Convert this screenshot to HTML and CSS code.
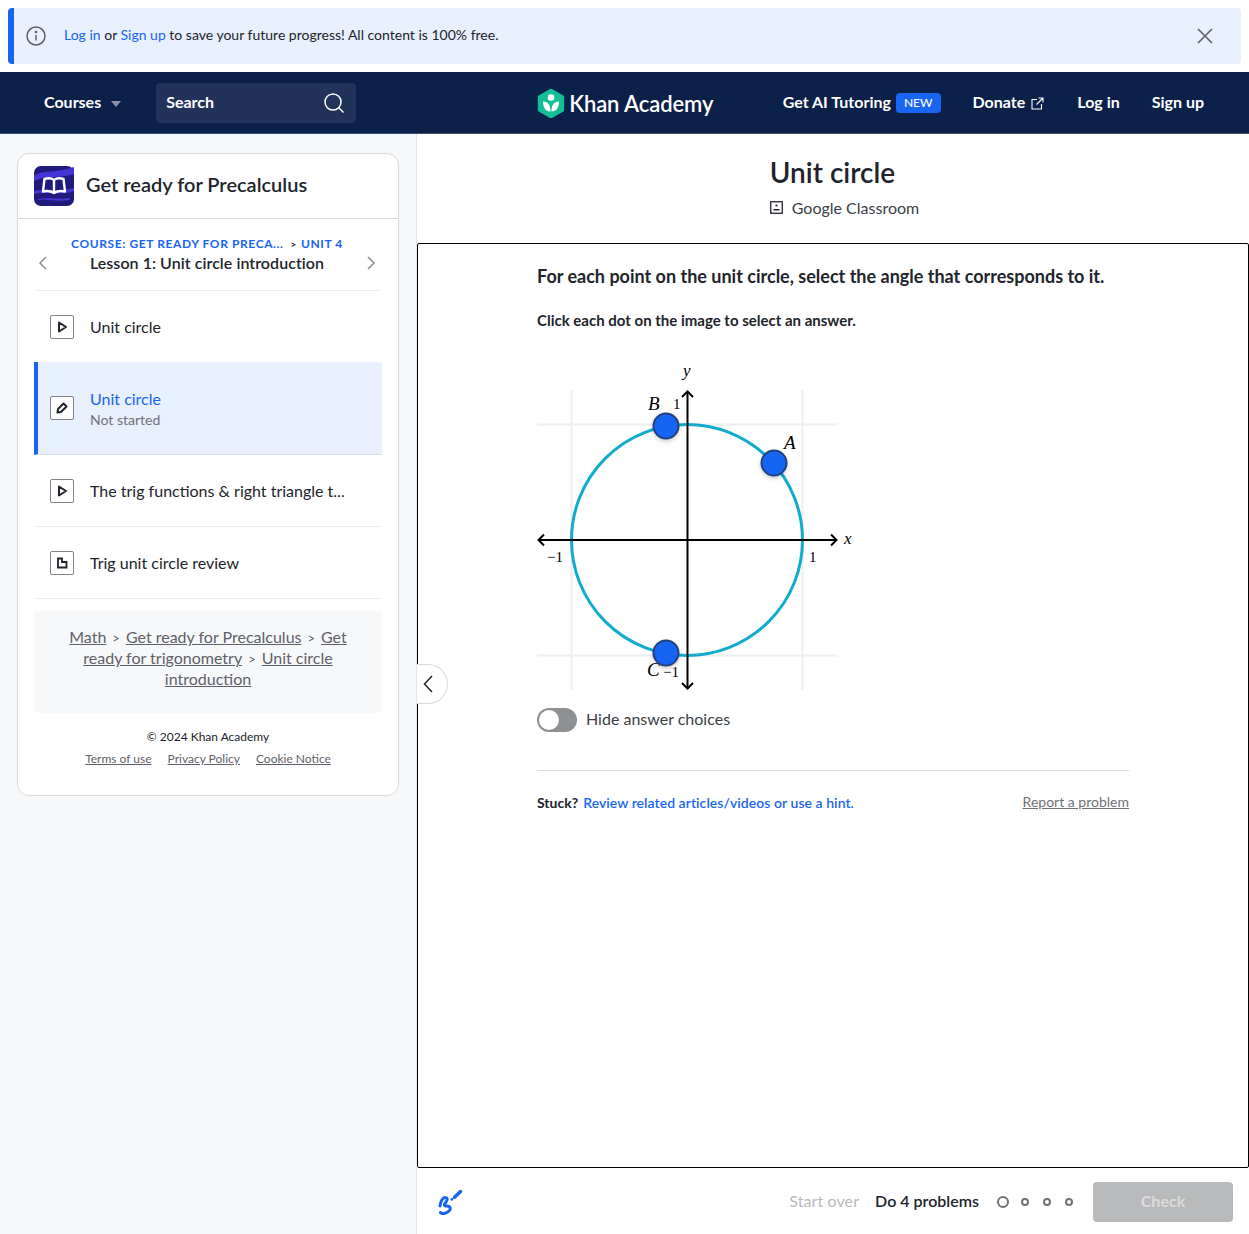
FILE: index.html
```html
<!DOCTYPE html>
<html lang="en">
<head>
    <meta charset="UTF-8" />
    <title>Unit circle</title>
    <link rel="stylesheet" href="styles.css">
</head>
<body>
    <div class="banner">
        <svg class="bannerInfo" width="20" height="20" viewBox="0 0 20 20" fill="none" stroke="#5f6066" stroke-width="1.5">
            <circle cx="10" cy="10" r="9"/>
            <path d="M10 9v5.5"/>
            <circle cx="10" cy="6" r=".6"/>
        </svg>
        <p class="bannerText"><a href="#">Log in</a> or <a href="#">Sign up</a> to save your future progress! All content is 100% free.</p>
        <svg class="bannerClose" width="16" height="16" viewBox="0 0 16 16" stroke="#5f6066" stroke-width="1.6">
            <path d="M1 1l14 14M15 1L1 15"/>
        </svg>
    </div>

    <nav class="topnav">
        <div class="navLeft">
            <span class="navLink">Courses</span>
            <span class="caret"></span>
            <div class="searchBox">
                <span class="searchLabel">Search</span>
                <svg width="22" height="22" viewBox="0 0 22 22" fill="none" stroke="#fff" stroke-width="1.5">
                    <circle cx="10" cy="10" r="8"/>
                    <path d="M15.8 15.8l4.7 4.7"/>
                </svg>
            </div>
        </div>
        <div class="brand">
            <svg width="28" height="29" viewBox="0 0 28 29">
                <path d="M14 0.5l12.2 7v14L14 28.5 1.8 21.500v-14z" fill="#14bf96" stroke="#14bf96" stroke-linejoin="round" stroke-width="2"/>
                <circle cx="14" cy="8.500" r="3.300" fill="#fff"/>
                <path d="M6 12.500c5 0 7.500 3.500 7.500 10-5 0-7.500-4-7.500-10zM22 12.500c-5 0-7.500 3.500-7.500 10 5 0 7.500-4 7.500-10z" fill="#fff"/>
            </svg>
            <span class="brandName">Khan Academy</span>
        </div>
        <div class="navRight">
            <span class="navLink">Get AI Tutoring</span>
            <span class="newBadge">NEW</span>
            <span class="navLink donate">Donate</span>
            <svg class="extIcon" width="13" height="13" viewBox="0 0 13 13" fill="none" stroke="#fff" stroke-width="1.100">
                <path d="M6 2.500H1v9.500h9.500V7M7.500 1H12v4.500M12 1L5.500 7.500"/>
            </svg>
            <span class="navLink login">Log in</span>
            <span class="navLink signup">Sign up</span>
        </div>
    </nav>

    <div class="pageBody">
        <aside class="sidebar">
            <div class="card">
                <div class="cardHead">
                    <svg class="courseIcon" width="40" height="40" viewBox="0 0 40 40">
                        <rect width="40" height="40" rx="7" fill="#201a7c"/>
                        <path d="M0 9c10-5 24-2 40-8v7C26 13 12 9 0 15zM0 25c12-3 26 1 40-3v3c-14 5-28 0-40 3zM4 33c12-2 20 1 32-1v2c-12 2-20-1-32 0z" fill="#4534d6"/>
                        <path d="M10.500 13c3.500-1 7-1 9.500 1 2.500-2 6-2 9.500-1l1.500 12.500c-4-1-8-.5-11 1.500-3-2-7-2.500-11-1.500zM20 14v13" fill="none" stroke="#fff" stroke-width="2.400" stroke-linejoin="round"/>
                    </svg>
                    <h2 class="courseTitle">Get ready for Precalculus</h2>
                </div>
                <div class="cardBody">
                    <div class="lessonNav">
                        <svg class="lessonArrow" width="9" height="14" viewBox="0 0 9 14" fill="none" stroke="#8a8b90" stroke-width="1.500"><path d="M8 1L2 7l6 6"/></svg>
                        <div class="lessonInfo">
                            <div class="crumbs"><a href="#">COURSE: GET READY FOR PRECA...</a><span class="crumbSep">&gt;</span><a href="#">UNIT 4</a></div>
                            <div class="lessonName">Lesson 1: Unit circle introduction</div>
                        </div>
                        <svg class="lessonArrow" width="9" height="14" viewBox="0 0 9 14" fill="none" stroke="#8a8b90" stroke-width="1.500"><path d="M1 1l6 6-6 6"/></svg>
                    </div>

                    <ul class="itemList">
                        <li class="item plain">
                            <span class="itemIcon"><svg width="12" height="12" viewBox="0 0 12 12"><path d="M3 1.500l7 4.500-7 4.500z" fill="none" stroke="#21242c" stroke-width="2" stroke-linejoin="round"/></svg></span>
                            <span class="itemTitle">Unit circle</span>
                        </li>
                        <li class="item active">
                            <span class="itemIcon"><svg width="12" height="12" viewBox="0 0 12 12"><path d="M7.500 1.500l3 3-5.500 5.500-3.500.5.5-3.500z" fill="none" stroke="#21242c" stroke-width="2" stroke-linejoin="round"/></svg></span>
                            <span class="itemText">
                                <span class="itemTitle">Unit circle</span>
                                <span class="itemSub">Not started</span>
                            </span>
                        </li>
                        <li class="item">
                            <span class="itemIcon"><svg width="12" height="12" viewBox="0 0 12 12"><path d="M3 1.500l7 4.500-7 4.500z" fill="none" stroke="#21242c" stroke-width="2" stroke-linejoin="round"/></svg></span>
                            <span class="itemTitle">The trig functions &amp; right triangle t...</span>
                        </li>
                        <li class="item">
                            <span class="itemIcon"><svg width="12" height="12" viewBox="0 0 12 12"><path d="M2 1.500h4v3.500h4.500v5.500H2z" fill="none" stroke="#21242c" stroke-width="1.800"/></svg></span>
                            <span class="itemTitle">Trig unit circle review</span>
                        </li>
                    </ul>

                    <div class="pathBox">
                        <a href="#">Math</a><span class="pathSep">&gt;</span><a href="#">Get ready for Precalculus</a><span class="pathSep">&gt;</span><a href="#">Get ready for trigonometry</a><span class="pathSep">&gt;</span><a href="#">Unit circle introduction</a>
                    </div>

                    <div class="copyright">© 2024 Khan Academy</div>
                    <div class="legalLinks">
                        <a href="#">Terms of use</a>
                        <a href="#">Privacy Policy</a>
                        <a href="#">Cookie Notice</a>
                    </div>
                </div>
            </div>
        </aside>

        <main class="content">
            <header class="contentHead">
                <div class="headInner">
                    <h1 class="pageTitle">Unit circle</h1>
                    <div class="classroom">
                        <svg width="13" height="13" viewBox="0 0 13 13" fill="none">
                            <rect x=".75" y=".75" width="11.500" height="11.500" stroke="#21242c" stroke-width="1.300"/>
                            <circle cx="6.500" cy="4.500" r="1.100" fill="#21242c"/>
                            <path d="M3.500 8h6v1.500h-6z" fill="#21242c"/>
                        </svg>
                        <span>Google Classroom</span>
                    </div>
                </div>
            </header>

            <section class="exercise">
                <div class="exerciseInner">
                    <p class="prompt">For each point on the unit circle, select the angle that corresponds to it.</p>
                    <p class="instruction">Click each dot on the image to select an answer.</p>

                    <svg class="graph" width="330" height="340" viewBox="537 360 330 340">
                        <defs>
                            <filter id="dotShadow" x="-50%" y="-50%" width="200%" height="200%">
                                <feDropShadow dx="0" dy="2" stdDeviation="2" flood-color="#000" flood-opacity=".2"/>
                            </filter>
                        </defs>
                        <g stroke="#eeeeee" stroke-width="2">
                            <path d="M571.500 390v300M802.500 390v300M537 424.500h300M537 655.500h300"/>
                        </g>
                        <circle cx="687" cy="540" r="115.500" fill="none" stroke="#11accd" stroke-width="3"/>
                        <g fill="none" stroke="#000" stroke-width="2">
                            <path d="M539 540h297M687.500 392v297"/>
                            <path d="M544 534.500l-5.500 5.500 5.500 5.500M831 534.500l5.500 5.500-5.500 5.500M682 397l5.500-5.500 5.500 5.500M682 683l5.500 5.500 5.500-5.500"/>
                        </g>
                        <g class="mathLabels">
                            <text x="683" y="376" class="mathVar">y</text>
                            <text x="844" y="544" class="mathVar">x</text>
                            <text x="809" y="562">1</text>
                            <text x="547" y="562">−1</text>
                            <text x="673" y="409">1</text>
                            <text x="663" y="677">−1</text>
                            <text x="648" y="410" class="mathVar big">B</text>
                            <text x="784" y="449" class="mathVar big">A</text>
                            <text x="647" y="676" class="mathVar big">C</text>
                        </g>
                        <g fill="#1865f2" stroke="#23407f" stroke-width="2" filter="url(#dotShadow)">
                            <circle cx="774" cy="463" r="12.500"/>
                            <circle cx="666" cy="426" r="12.500"/>
                            <circle cx="666" cy="653" r="12.500"/>
                        </g>
                    </svg>

                    <div class="toggleRow">
                        <span class="toggle"><span class="toggleKnob"></span></span>
                        <span class="toggleLabel">Hide answer choices</span>
                    </div>

                    <div class="stuckRow">
                        <span class="stuck"><b>Stuck?</b><a href="#">Review related articles/videos or use a hint.</a></span>
                        <a href="#" class="report">Report a problem</a>
                    </div>
                </div>
            </section>

            <footer class="taskBar">
                <svg width="26" height="26" viewBox="0 0 26 26" fill="none" stroke="#1865f2" stroke-linecap="round" stroke-linejoin="round">
                    <path d="M16.500 8.300L22.500 2.500" stroke-width="3.500"/>
                    <path d="M13.700 10.500l.3-.3" stroke-width="2.500"/>
                    <path d="M2 17C2.500 12 5 8 7.500 8.500 10.500 9 9 12 7 14.500 5.500 16.500 7 17 9 17c3 0 4.500 2.500 2 5-2.500 2.500-7 3.500-8.500 1.500" stroke-width="3"/>
                </svg>
                <div class="taskRight">
                    <span class="startOver">Start over</span>
                    <span class="doCount">Do 4 problems</span>
                    <span class="dots">
                        <span class="dot first"></span>
                        <span class="dot"></span>
                        <span class="dot"></span>
                        <span class="dot"></span>
                    </span>
                    <button class="checkBtn" disabled>Check</button>
                </div>
            </footer>

            <div class="collapseTab">
                <svg width="10" height="18" viewBox="0 0 10 18" fill="none" stroke="#21242c" stroke-width="1.500"><path d="M9 1L1.500 9 9 17"/></svg>
            </div>
        </main>
    </div>
</body>
</html>
```

FILE: styles.css
```css
html, body {
    height: 100%;
}

body {
    margin: 0;
    font-family: 'Lato', sans-serif;
    color: #21242c;
    background: #fff;
    display: flex;
    flex-direction: column;
    overflow: hidden;
}

a {
    color: #1865f2;
    text-decoration: none;
}

/* top banner */
.banner {
    display: flex;
    align-items: center;
    height: 56px;
    margin: 8px 8px 8px 8px;
    padding: 0 28px 0 12px;
    box-sizing: border-box;
    flex-shrink: 0;
    background: #e8effd;
    border-left: 6px solid #1865f2;
    border-radius: 4px;
}

.bannerText {
    margin: 0 0 3px 18px;
    font-size: 14px;
    flex: 1;
}

.bannerInfo {
    flex-shrink: 0;
}

/* nav */
.topnav {
    position: relative;
    display: flex;
    align-items: center;
    justify-content: space-between;
    height: 62px;
    box-sizing: border-box;
    flex-shrink: 0;
    padding: 1px 45px 0 44px;
    background: #0c2149;
    border-bottom: 1px solid #3d4f73;
}

.navLeft, .navRight, .brand {
    display: flex;
    align-items: center;
}

.navLink, .searchLabel {
    padding-bottom: 4px;
    color: #fff;
    font-size: 16px;
    font-weight: 700;
}

.caret {
    width: 0;
    height: 0;
    margin-left: 10px;
    margin-top: 2px;
    border-left: 5.500px solid transparent;
    border-right: 5.500px solid transparent;
    border-top: 6px solid #8a93a6;
}

.searchBox {
    display: flex;
    align-items: center;
    justify-content: space-between;
    width: 200px;
    height: 40px;
    margin-left: 35px;
    padding: 0 11px 0 10px;
    box-sizing: border-box;
    background: #21335b;
    border-radius: 4px;
}

.brand {
    gap: 4px;
    margin-left: 181px;
}

.brandName {
    color: #fff;
    font-size: 22px;
    font-weight: 600;
    letter-spacing: -.1px;
}

.navRight {
    margin-left: auto;
}

.newBadge {
    margin-left: 5px;
    padding: 0 8px;
    height: 20px;
    line-height: 20px;
    font-size: 12px;
    font-weight: 500;
    color: #fff;
    background: #1865f2;
    border-radius: 4px;
}

.donate {
    margin-left: 32px;
}

.extIcon {
    margin-left: 6px;
}

.login {
    margin-left: 33px;
}

.signup {
    margin-left: 32px;
}

/* body */
.pageBody {
    position: relative;
    display: flex;
    flex: 1;
    min-height: 0;
}

.sidebar {
    width: 417px;
    padding: 19px 17px 0 17px;
    box-sizing: border-box;
    flex-shrink: 0;
    background: #f7f8fa;
    border-right: 1px solid #e4e5e6;
}

.card {
    background: #fff;
    border: 1px solid #d8d9db;
    border-radius: 12px;
    width: 382px;
    box-sizing: border-box;
}

.cardHead {
    display: flex;
    align-items: center;
    gap: 12px;
    height: 65px;
    padding: 0 16px;
    box-sizing: border-box;
    border-bottom: 1px solid #d8d9db;
}

.courseTitle {
    margin: 0 0 5px;
    font-size: 20px;
    font-weight: 600;
}

.cardBody {
    padding: 0 16px;
}

.lessonNav {
    display: flex;
    align-items: flex-end;
    justify-content: space-between;
    height: 72px;
    padding: 0 6px 20px 4px;
    box-sizing: border-box;
    border-bottom: 1px solid #eeeeef;
}

.lessonArrow {
    flex-shrink: 0;
}

.lessonInfo {
    text-align: center;
    margin-bottom: -4px;
}

.crumbs {
    font-size: 12px;
    font-weight: 700;
    letter-spacing: .6px;
    line-height: 16px;
}

.crumbSep {
    margin: 0 4px 0 7px;
    font-size: 10px;
    line-height: 1;
    color: #21242c;
}

.lessonName {
    font-size: 16px;
    font-weight: 600;
    letter-spacing: .05px;
    line-height: 22px;
}

.itemList {
    list-style: none;
    margin: 0;
    padding: 0;
}

.item {
    display: flex;
    align-items: center;
    gap: 16px;
    height: 72px;
    padding-left: 16px;
    box-sizing: border-box;
    border-bottom: 1px solid #eeeeef;
    font-size: 16px;
}

.item.plain {
    height: 71px;
    border-bottom: none;
}

.item.active {
    height: 93px;
    padding-left: 12px;
    background: #e8effd;
    border-left: 4px solid #1865f2;
    border-bottom: 1px solid #d6dfee;
}

.item.active .itemTitle {
    color: #1865f2;
}

.itemIcon {
    display: flex;
    align-items: center;
    justify-content: center;
    width: 24px;
    height: 24px;
    flex-shrink: 0;
    box-sizing: border-box;
    background: #fff;
    border: 1px solid #82848a;
    border-radius: 2px;
}

.itemText {
    display: flex;
    flex-direction: column;
    gap: 3px;
}

.itemSub {
    font-size: 14px;
    color: #6f7177;
}

.pathBox {
    margin-top: 12px;
    padding: 15px 32px 24px;
    background: #f7f8fa;
    border-radius: 4px;
    text-align: center;
    font-size: 16px;
    line-height: 21px;
}

.pathBox a, .legalLinks a {
    color: #5f6168;
    text-decoration: underline;
}

.pathSep {
    margin: 0 6px;
    font-size: 13px;
    line-height: 1;
    color: #5f6168;
}

.copyright {
    margin-top: 16px;
    font-size: 12px;
    line-height: 16px;
    text-align: center;
}

.legalLinks {
    display: flex;
    justify-content: center;
    gap: 16px;
    margin-top: 6px;
    padding-bottom: 28px;
    font-size: 12px;
    line-height: 16px;
}

/* main column */
.content {
    position: relative;
    display: flex;
    flex-direction: column;
    flex: 1;
    min-width: 0;
}

.contentHead {
    display: flex;
    justify-content: center;
    height: 109px;
    box-sizing: border-box;
    flex-shrink: 0;
    padding: 19px 0 0 23px;
}

.pageTitle {
    margin: 0;
    font-size: 28px;
    font-weight: 600;
    line-height: 38px;
}

.classroom {
    display: flex;
    align-items: center;
    gap: 9px;
    margin-top: 7px;
    font-size: 16px;
    color: #3b3e47;
}

.exercise {
    flex: 1;
    min-height: 0;
    box-sizing: border-box;
    border: 1.500px solid #000;
    border-right-width: 1px;
    border-radius: 2px;
}

.exerciseInner {
    width: 592px;
    margin-left: 119px;
    padding-top: 21px;
}

.prompt {
    margin: 0;
    font-size: 18px;
    font-weight: 700;
    line-height: 22px;
}

.instruction {
    margin: 23px 0 0;
    font-size: 15px;
    font-weight: 700;
    line-height: 20px;
}

.graph {
    display: block;
    margin-top: 30px;
}

.mathLabels text {
    font-family: 'Liberation Serif', serif;
    font-size: 15px;
    fill: #000;
}

.mathLabels .mathVar {
    font-style: italic;
    font-size: 17px;
}

.mathLabels .big {
    font-size: 19px;
}

.toggleRow {
    display: flex;
    align-items: center;
    gap: 9px;
    margin-top: 8px;
    font-size: 16px;
    color: #3b3e47;
}

.toggleLabel {
    padding-bottom: 4px;
}

.toggle {
    display: flex;
    align-items: center;
    width: 40px;
    height: 24px;
    padding: 0 2px;
    box-sizing: border-box;
    background: #8f9094;
    border-radius: 12px;
}

.toggleKnob {
    width: 20px;
    height: 20px;
    background: #fff;
    border-radius: 50%;
}

.stuckRow {
    display: flex;
    justify-content: space-between;
    align-items: center;
    margin-top: 38px;
    padding-top: 22px;
    border-top: 1px solid #d8d9db;
    font-size: 14px;
    line-height: 18px;
}

.stuck b {
    margin-right: 5px;
}

.stuck a {
    font-weight: 600;
    letter-spacing: .05px;
}

.report {
    padding-bottom: 2px;
    color: #6f7177;
    text-decoration: underline;
}

/* bottom bar */
.taskBar {
    display: flex;
    align-items: center;
    justify-content: space-between;
    height: 66px;
    box-sizing: border-box;
    flex-shrink: 0;
    padding: 1px 16px 0 21px;
}

.taskRight {
    display: flex;
    align-items: center;
}

.startOver, .doCount {
    padding-bottom: 2px;
    font-size: 16px;
}

.startOver {
    color: #b8b9bb;
    letter-spacing: .1px;
}

.doCount {
    margin-left: 16px;
    font-weight: 600;
}

.dots {
    display: flex;
    align-items: center;
    gap: 14px;
    margin-left: 18px;
}

.dot {
    width: 8px;
    height: 8px;
    box-sizing: border-box;
    border: 2px solid #6f7177;
    border-radius: 50%;
}

.dot.first {
    width: 12px;
    height: 12px;
    margin-right: -2px;
}

.checkBtn {
    width: 140px;
    height: 40px;
    margin-left: 20px;
    padding-bottom: 3px;
    border: none;
    border-radius: 4px;
    font-family: inherit;
    font-size: 16px;
    font-weight: 700;
    color: #dcdddd;
    background: #b8b9bb;
}

/* sits across the frame edge */
.collapseTab {
    position: absolute;
    left: 0;
    top: 530px;
    display: flex;
    align-items: center;
    width: 31px;
    height: 40px;
    padding-left: 6px;
    box-sizing: border-box;
    background: #fff;
    border: 1px solid #d8d9db;
    border-left: none;
    border-radius: 0 20px 20px 0;
}
```
